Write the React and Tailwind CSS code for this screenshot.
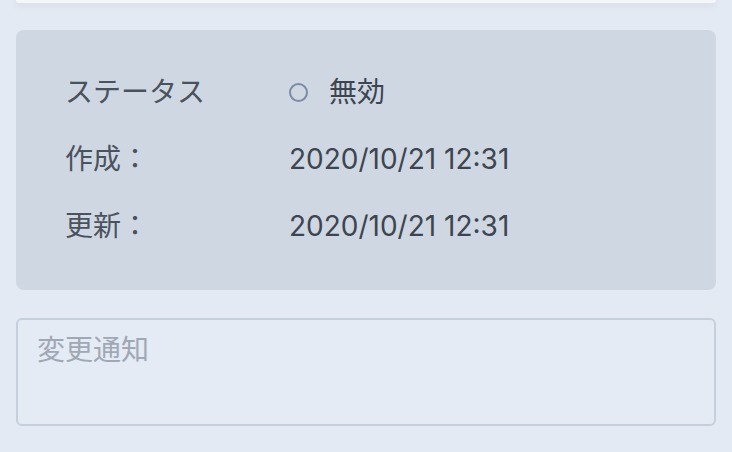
const rows = [
  { label: 'ステータス', status: true, value: '無効' },
  { label: '作成：', value: '2020/10/21 12:31' },
  { label: '更新：', value: '2020/10/21 12:31' },
];

const App = () => {
  return (
    <div
      className="min-h-[452px] w-full overflow-hidden bg-[#e4eaf3] px-4 text-[#3d4550]"
      style={{ fontFamily: 'Inter, "Noto Sans CJK JP", sans-serif' }}
    >
      <div className="h-[3px] rounded-b-xl bg-[#f4f6fa] shadow-[0_2px_6px_rgba(100,116,139,0.18)]" />

      <section className="mt-[27px] rounded-lg bg-[#cfd7e2] pb-[44px] pl-[49px] pt-[42px]">
        <dl className="flex flex-col gap-[27px]">
          {rows.map((row) => (
            <div key={row.label} className="flex h-10 items-center text-[28px]">
              <dt className="w-[224px] text-[#4a525d]">{row.label}</dt>
              <dd className="flex items-center">
                {row.status && (
                  <span className="mr-[21px] inline-block size-[19px] rounded-full border-2 border-[#7b8ca6]" />
                )}
                {row.value}
              </dd>
            </div>
          ))}
        </dl>
      </section>

      <textarea
        className="mt-[28px] block h-[108px] w-full resize-none rounded-md border-2 border-[#c6cfdc] bg-[#e4ebf4] px-[19px] py-[14px] text-[28px] leading-8 outline-none placeholder:text-[#a0a8b4]"
        placeholder="変更通知"
      />
    </div>
  );
};

export default App;
